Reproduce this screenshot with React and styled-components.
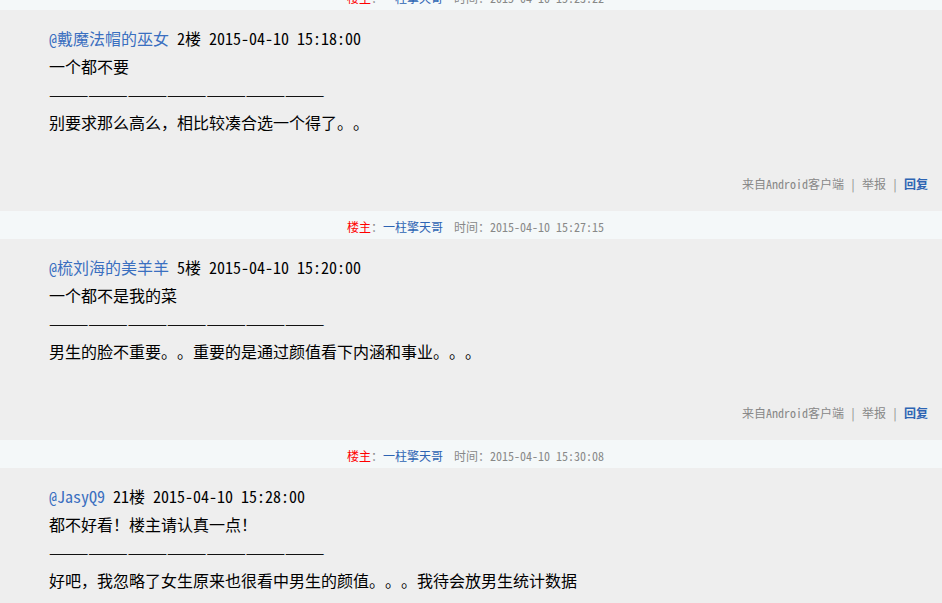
import React from "react";
import styled, { createGlobalStyle } from "styled-components";

const Global = createGlobalStyle`
  html, body { margin: 0; padding: 0; background: #eeeeee; overflow: hidden; }
  body {
    font-family: "Noto Sans Mono CJK SC", "Noto Sans CJK SC", "Liberation Mono", monospace;
    text-spacing-trim: space-all;
  }
`;

const Page = styled.div`
  margin-top: -18px;
  display: flex;
  flex-direction: column;
`;

const Header = styled.div`
  height: 28px;
  background: #f4f8f9;
  display: flex;
  align-items: center;
  justify-content: center;
  padding-left: 9px;
  padding-top: 3px;
  box-sizing: border-box;
  font-size: 12px;
  color: #888;
  white-space: pre;
`;

const Owner = styled.span`
  color: #ff0000;
`;

const HostName = styled.span`
  color: #2d64b3;
  margin-right: 11px;
`;

const Block = styled.div`
  height: 201px;
  box-sizing: border-box;
  background: #eeeeee;
  padding: 14px 14px 17px 49px;
  display: flex;
  flex-direction: column;
`;

const Content = styled.div`
  display: flex;
  flex-direction: column;
`;

const Line = styled.div`
  font-size: 16px;
  line-height: 28px;
  height: 28px;
  color: #000;
  white-space: pre;
  text-spacing-trim: space-all;
`;

const Rule = styled(Line)`
  color: #111;
`;

const User = styled.span`
  color: #3a6fc0;
`;

const Footer = styled.div`
  margin-top: auto;
  display: flex;
  justify-content: flex-end;
  font-size: 12px;
  line-height: 20px;
  color: #888;
  white-space: pre;
`;

const Sep = styled.span`
  padding: 0 6px;
  color: #888;
`;

const Reply = styled.span`
  color: #2d64b3;
  font-weight: bold;
`;

const posts = [
  {
    host: "一柱擎天哥",
    time: "2015-04-10 15:23:22",
    user: "@戴魔法帽的巫女",
    floor: "2楼 2015-04-10 15:18:00",
    q: "一个都不要",
    a: "别要求那么高么，相比较凑合选一个得了。。",
  },
  {
    host: "一柱擎天哥",
    time: "2015-04-10 15:27:15",
    user: "@梳刘海的美羊羊",
    floor: "5楼 2015-04-10 15:20:00",
    q: "一个都不是我的菜",
    a: "男生的脸不重要。。重要的是通过颜值看下内涵和事业。。。",
  },
  {
    host: "一柱擎天哥",
    time: "2015-04-10 15:30:08",
    user: "@JasyQ9",
    floor: "21楼 2015-04-10 15:28:00",
    q: "都不好看！楼主请认真一点！",
    a: "好吧，我忽略了女生原来也很看中男生的颜值。。。我待会放男生统计数据",
  },
];

const dashes = "—————————————————————";

export default function App() {
  return (
    <div lang="zh-CN">
      <Global />
      <Page>
        {posts.map((p, i) => (
          <React.Fragment key={i}>
            <Header>
              <Owner>楼主</Owner>
              <span>：</span>
              <HostName>{p.host}</HostName>
              <span>时间：{p.time}</span>
            </Header>
            <Block>
              <Content>
                <Line>
                  <User>{p.user}</User> {p.floor}
                </Line>
                <Line>{p.q}</Line>
                <Rule>{dashes}</Rule>
                <Line>{p.a}</Line>
              </Content>
              <Footer>
                <span>来自Android客户端</span>
                <Sep>|</Sep>
                <span>举报</span>
                <Sep>|</Sep>
                <Reply>回复</Reply>
              </Footer>
            </Block>
          </React.Fragment>
        ))}
      </Page>
    </div>
  );
}
